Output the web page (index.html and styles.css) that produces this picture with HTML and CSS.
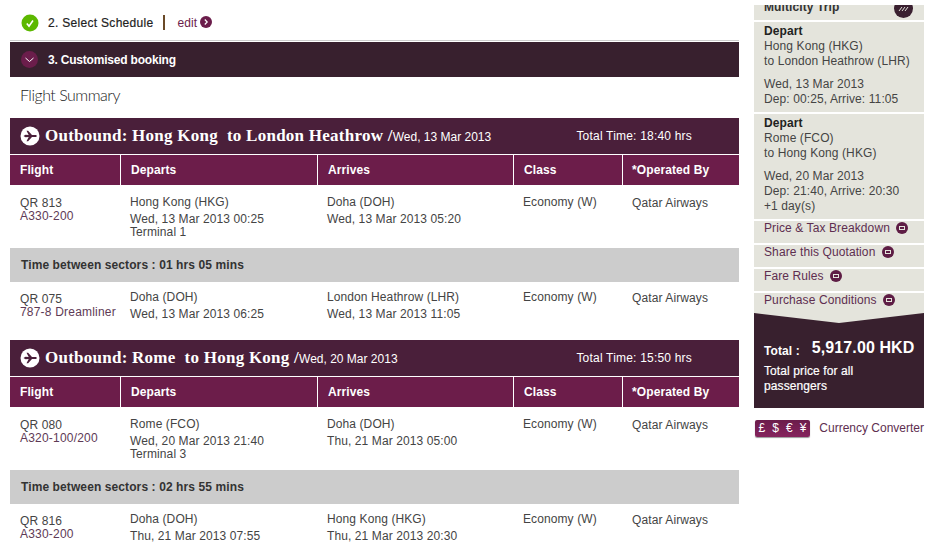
FILE: index.html
```html
<!DOCTYPE html>
<html lang="en">
<head>
    <meta charset="UTF-8">
    <title>Customised booking</title>
    <link rel="stylesheet" href="styles.css">
</head>
<body>
<div class="page">
    <main class="main">
        <div class="step-done">
            <svg class="check" width="18" height="18" viewBox="0 0 18 18"><circle cx="9" cy="9" r="8.5" fill="#5cb800"/><path d="M5.8 9.5l2.2 2.6 4-5.6" fill="none" stroke="#fff" stroke-width="1.6"/></svg>
            <span class="step-name">2. Select Schedule</span>
            <span class="step-sep"></span>
            <a class="edit">edit</a>
            <svg class="edit-icon" width="12" height="12" viewBox="0 0 12 12"><circle cx="6" cy="6" r="6" fill="#6b1d4b"/><path d="M4.8 3.5L7.2 6 4.8 8.5" fill="none" stroke="#fff" stroke-width="1.2"/></svg>
        </div>
        <div class="step-current">
            <svg width="17" height="17" viewBox="0 0 17 17"><circle cx="8.5" cy="8.5" r="8.5" fill="#6b1d4b"/><path d="M4.5 7l4 3.500 4-3.500" fill="none" stroke="#fff" stroke-width="1"/></svg>
            <span>3. Customised booking</span>
        </div>
        <h2 class="summary-title">Flight Summary</h2>

        <section class="leg">
            <div class="leg-head">
                <svg class="plane" width="20" height="20" viewBox="0 0 20 20"><circle cx="10" cy="10" r="9.500" fill="#fff"/><path d="M3.500 10l2-1.200 3.200.2L6.500 4.800h1.600L12 9h3.300c1 0 1.500.5 1.500 1s-.5 1-1.500 1H12l-3.900 4.200H6.500L8.700 11l-3.200.2z" fill="#4a1f3a"/></svg>
                <span class="leg-route">Outbound: Hong Kong&nbsp; to London Heathrow /</span>
                <span class="leg-date">Wed, 13 Mar 2013</span>
                <span class="leg-time">Total Time: 18:40 hrs</span>
            </div>
            <table class="flights">
                <thead>
                    <tr><th class="c1">Flight</th><th class="c2">Departs</th><th class="c3">Arrives</th><th class="c4">Class</th><th class="c5">*Operated By</th></tr>
                </thead>
                <tbody>
                    <tr class="row-tall">
                        <td>QR 813<div class="plane-type">A330-200</div></td>
                        <td>Hong Kong (HKG)<div class="when">Wed, 13 Mar 2013 00:25</div><div class="term">Terminal 1</div></td>
                        <td>Doha (DOH)<div class="when">Wed, 13 Mar 2013 05:20</div></td>
                        <td>Economy (W)</td>
                        <td class="op">Qatar Airways</td>
                    </tr>
                    <tr class="sector"><td colspan="5">Time between sectors : 01 hrs 05 mins</td></tr>
                    <tr class="row-short">
                        <td>QR 075<div class="plane-type">787-8 Dreamliner</div></td>
                        <td>Doha (DOH)<div class="when">Wed, 13 Mar 2013 06:25</div></td>
                        <td>London Heathrow (LHR)<div class="when">Wed, 13 Mar 2013 11:05</div></td>
                        <td>Economy (W)</td>
                        <td class="op">Qatar Airways</td>
                    </tr>
                </tbody>
            </table>
        </section>

        <section class="leg">
            <div class="leg-head">
                <svg class="plane" width="20" height="20" viewBox="0 0 20 20"><circle cx="10" cy="10" r="9.500" fill="#fff"/><path d="M3.500 10l2-1.200 3.200.2L6.500 4.800h1.600L12 9h3.300c1 0 1.500.5 1.500 1s-.5 1-1.500 1H12l-3.900 4.200H6.500L8.700 11l-3.200.2z" fill="#4a1f3a"/></svg>
                <span class="leg-route">Outbound: Rome&nbsp; to Hong Kong /</span>
                <span class="leg-date">Wed, 20 Mar 2013</span>
                <span class="leg-time">Total Time: 15:50 hrs</span>
            </div>
            <table class="flights">
                <thead>
                    <tr><th class="c1">Flight</th><th class="c2">Departs</th><th class="c3">Arrives</th><th class="c4">Class</th><th class="c5">*Operated By</th></tr>
                </thead>
                <tbody>
                    <tr class="row-tall">
                        <td>QR 080<div class="plane-type">A320-100/200</div></td>
                        <td>Rome (FCO)<div class="when">Wed, 20 Mar 2013 21:40</div><div class="term">Terminal 3</div></td>
                        <td>Doha (DOH)<div class="when">Thu, 21 Mar 2013 05:00</div></td>
                        <td>Economy (W)</td>
                        <td class="op">Qatar Airways</td>
                    </tr>
                    <tr class="sector"><td colspan="5">Time between sectors : 02 hrs 55 mins</td></tr>
                    <tr class="row-short">
                        <td>QR 816<div class="plane-type">A330-200</div></td>
                        <td>Doha (DOH)<div class="when">Thu, 21 Mar 2013 07:55</div></td>
                        <td>Hong Kong (HKG)<div class="when">Thu, 21 Mar 2013 20:30</div></td>
                        <td>Economy (W)</td>
                        <td class="op">Qatar Airways</td>
                    </tr>
                </tbody>
            </table>
        </section>
    </main>

    <aside class="side">
        <div class="side-top">
            <span>Multicity Trip</span>
            <svg width="19" height="19" viewBox="0 0 19 19"><circle cx="9.500" cy="9.500" r="9.500" fill="#3a2030"/><path d="M5 12l3-4M8 12l3-4M11 12l3-4" stroke="#e4e4dc" stroke-width="1"/></svg>
        </div>
        <div class="side-box">
            <b>Depart</b><br>Hong Kong (HKG)<br>to London Heathrow (LHR)
            <p>Wed, 13 Mar 2013<br>Dep: 00:25, Arrive: 11:05</p>
        </div>
        <div class="side-box">
            <b>Depart</b><br>Rome (FCO)<br>to Hong Kong (HKG)
            <p>Wed, 20 Mar 2013<br>Dep: 21:40, Arrive: 20:30<br>+1 day(s)</p>
        </div>
        <a class="side-link">Price &amp; Tax Breakdown <i class="more"></i></a>
        <a class="side-link">Share this Quotation <i class="more"></i></a>
        <a class="side-link">Fare Rules <i class="more"></i></a>
        <a class="side-link">Purchase Conditions <i class="more"></i></a>
        <div class="total">
            <div class="total-line"><b class="total-label">Total :</b><b class="total-price">5,917.00 HKD</b></div>
            <div class="total-note">Total price for all passengers</div>
        </div>
        <div class="currency">
            <span class="currency-btn"><span>£</span><span>$</span><span>€</span><span>¥</span></span>
            <a>Currency Converter</a>
        </div>
    </aside>
</div>
</body>
</html>
```

FILE: styles.css
```css
html, body {
    margin: 0;
    padding: 0;
    height: 550px;
    overflow: hidden;
    background-color: #fff;
}

body {
    font-family: "Liberation Sans", Arial, sans-serif;
    font-size: 12px;
    letter-spacing: 0.1px;
    color: #444;
}

.page {
    display: flex;
    align-items: flex-start;
    padding-left: 10px;
}

.main {
    width: 729px;
    flex: none;
}

/* steps */
.step-done {
    display: flex;
    align-items: center;
    height: 41px;
    padding: 6px 0 0 11px;
    box-sizing: border-box;
    border-bottom: 1px solid #ccc;
}

.step-name {
    margin-left: 9px;
    color: #222;
    letter-spacing: 0.3px;
    -webkit-text-stroke: 0.2px #222;
}

.step-sep {
    width: 2px;
    height: 15px;
    margin: -2px 12px 0 10px;
    background-color: #6a4a28;
}

.edit {
    color: #6b1d4b;
    margin-right: 3px;
}

.edit-icon {
    margin-top: -3px;
}

.step-current {
    display: flex;
    align-items: center;
    height: 35px;
    margin-top: 1px;
    padding-left: 11px;
    background-color: #38202e;
    color: #fff;
    font-weight: bold;
    letter-spacing: -0.2px;
}

.step-current span {
    margin-left: 10px;
}

.summary-title {
    margin: 0;
    padding: 8px 0 0 10px;
    height: 33px;
    font-family: "Lato", sans-serif;
    font-weight: 300;
    font-size: 16px;
    letter-spacing: -0.5px;
    line-height: 20px;
    color: #222;
}

/* legs */
.leg-head {
    display: flex;
    align-items: center;
    height: 36px;
    padding-left: 10px;
    background-color: #4a1f3a;
    color: #fff;
}

.leg-route {
    margin-left: 5px;
    font-family: "Liberation Serif", serif;
    font-weight: bold;
    font-size: 17px;
    letter-spacing: 0.25px;
    white-space: pre;
}

.leg-date {
    margin-top: 2px;
    letter-spacing: 0;
}

.leg-time {
    margin-left: auto;
    margin-right: 47px;
    margin-top: -1px;
    letter-spacing: 0.2px;
}

.flights {
    width: 729px;
    table-layout: fixed;
    border-collapse: separate;
    border-spacing: 0;
}

.flights th {
    box-sizing: border-box;
    height: 31px;
    padding: 0 0 0 10px;
    border-top: 1px solid #fff;
    border-left: 1px solid #fff;
    background-color: #6c1d4a;
    color: #fff;
    text-align: left;
    font-size: 12px;
}

.flights th:first-child {
    border-left: none;
}

.flights th.c5 {
    padding-left: 9px;
}

.c1 { width: 110px; }
.c2 { width: 197px; }
.c3 { width: 196px; }
.c4 { width: 109px; }
.c5 { width: 117px; }

.flights td {
    padding: 10px 0 0 10px;
    vertical-align: top;
    line-height: 14px;
}

.flights td:first-child,
.flights td.op {
    padding-top: 11px;
}

.row-tall {
    height: 63px;
}

.row-short {
    height: 58px;
}

.flights .row-short td {
    padding-top: 8px;
}

.flights .row-short td:first-child {
    padding-top: 10px;
}

.flights .row-short td.op {
    padding-top: 9px;
}

.plane-type {
    color: #5e3a55;
    line-height: 13px;
    letter-spacing: 0.2px;
}

.when {
    margin-top: 4px;
    line-height: 13px;
}

.term {
    line-height: 13px;
}

.flights .sector td {
    height: 34px;
    padding: 0 0 0 11px;
    vertical-align: middle;
    background-color: #ccc;
    font-weight: bold;
    color: #333;
}

/* side column */
.side {
    width: 170px;
    flex: none;
    margin: 5px 0 0 15px;
    line-height: 15px;
}

.side-top {
    display: flex;
    justify-content: space-between;
    height: 15px;
    padding: 0 11px 0 10px;
    margin-bottom: 2px;
    overflow: hidden;
    background-color: #e4e4dc;
    font-weight: bold;
    color: #333;
}

.side-top span {
    margin-top: -5px;
}

.side-top svg {
    margin-top: -6px;
}

.side-box {
    padding: 2px 10px 5px;
    margin-bottom: 2px;
    background-color: #e4e4dc;
    color: #444;
}

.side-box b {
    color: #222;
}

.side-box p {
    margin: 8px 0 0;
}

.side-link {
    display: block;
    height: 22px;
    padding-left: 10px;
    margin-bottom: 2px;
    background-color: #e4e4dc;
    color: #5e2e50;
}

.more {
    display: inline-block;
    box-sizing: border-box;
    width: 12px;
    height: 12px;
    margin-left: 3px;
    vertical-align: -2px;
    border-radius: 50%;
    background-color: #5e1d45;
    position: relative;
}

.more::after {
    content: "";
    position: absolute;
    left: 3px;
    top: 4px;
    width: 4px;
    height: 2px;
    border: 1px solid #e4e4dc;
}

.total {
    position: relative;
    margin-top: -4px;
    height: 95px;
    padding: 27px 10px 0;
    box-sizing: border-box;
    background-color: #38202e;
    color: #fff;
}

/* gray notch at the top of the total box */
.total::before {
    content: "";
    position: absolute;
    left: 0;
    top: 0;
    width: 100%;
    height: 10px;
    background-color: #e4e4dc;
    clip-path: polygon(0 0, 100% 0, 50% 100%);
}

.total-line {
    display: flex;
    align-items: flex-start;
    white-space: nowrap;
}

.total-label {
    margin-top: 4px;
    font-size: 12px;
}

.total-price {
    margin-left: 12px;
    font-size: 16px;
}

.total-note {
    margin-top: 5px;
    -webkit-text-stroke: 0.2px #fff;
}

.currency {
    display: flex;
    align-items: center;
    justify-content: space-between;
    margin-top: 12px;
    letter-spacing: 0;
    color: #5e2e50;
}

.currency-btn {
    display: flex;
    width: 55px;
    height: 17px;
    margin-left: 1px;
    border-radius: 2px;
    background: linear-gradient(#6b1d4b, #85235d);
    box-shadow: 0 1px 1px #999;
    color: #fff;
    line-height: 17px;
    text-align: center;
}

.currency-btn span {
    flex: 1;
}
```
